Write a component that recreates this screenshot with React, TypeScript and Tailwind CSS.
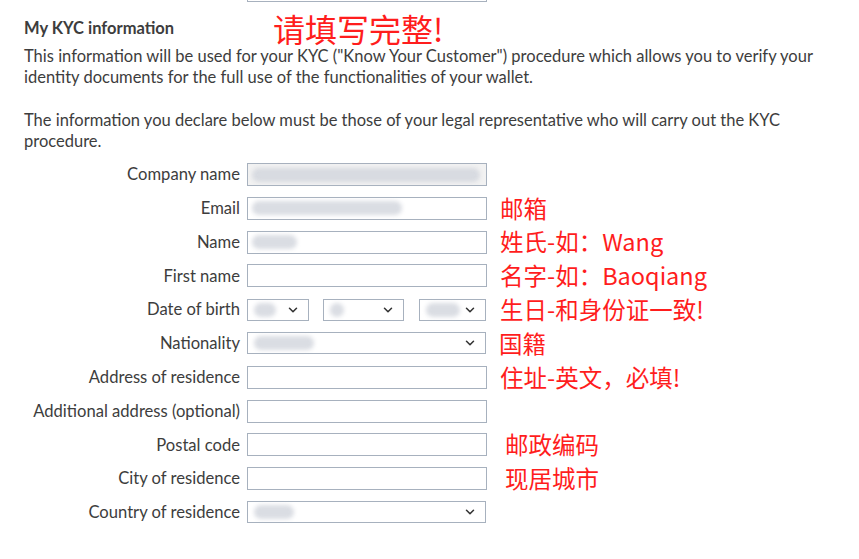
import { ChevronDown } from 'lucide-react'

const sans = 'font-["Lato","Liberation_Sans",sans-serif]'
const cjk = 'font-["Noto_Sans_CJK_SC","Liberation_Sans",sans-serif]'

/** Tache floue pour masquer une valeur */
function Blur({ w, className = '' }: { w: number; className?: string }) {
  return (
    <span
      className={`inline-block h-[14px] rounded-full bg-gray-300/80 blur-[2px] ${className}`}
      style={{ width: w }}
    />
  )
}

function Select({ w, blur, className = '' }: { w: string; blur?: number; className?: string }) {
  return (
    <div
      className={`flex h-[22px] items-center justify-between border border-[#a7b1be] bg-white pl-1.5 pr-2 ${w} ${className}`}
    >
      {blur ? <Blur w={blur} /> : <span />}
      <ChevronDown size={14} strokeWidth={2.6} className="text-[#333]" />
    </div>
  )
}

function Input({ blur, disabled }: { blur?: number; disabled?: boolean }) {
  return (
    <div
      className={`flex h-[23px] w-[240px] items-center border border-[#a7b1be] px-1 ${disabled ? 'bg-[#f2f2f2]' : 'bg-white'}`}
    >
      {blur ? <Blur w={blur} /> : null}
    </div>
  )
}

type Row = { label: string; field: React.ReactNode; note?: string; noteOffset?: boolean }

const rows: Row[] = [
  { label: 'Company name', field: <Input disabled blur={228} /> },
  { label: 'Email', field: <Input blur={150} />, note: '邮箱' },
  { label: 'Name', field: <Input blur={45} />, note: '姓氏-如：Wang' },
  { label: 'First name', field: <Input />, note: '名字-如：Baoqiang' },
  {
    label: 'Date of birth',
    field: (
      <div className="flex w-[240px]">
        <Select w="w-[62px]" blur={22} />
        <Select w="w-[81px]" blur={14} className="ml-[14px]" />
        <Select w="w-[67px]" blur={34} className="ml-[15px]" />
      </div>
    ),
    note: '生日-和身份证一致!',
  },
  { label: 'Nationality', field: <Select w="w-[239px]" blur={60} />, note: '国籍' },
  { label: 'Address of residence', field: <Input />, note: '住址-英文，必填!' },
  { label: 'Additional address (optional)', field: <Input /> },
  { label: 'Postal code', field: <Input />, note: '邮政编码', noteOffset: true },
  { label: 'City of residence', field: <Input />, note: '现居城市', noteOffset: true },
  { label: 'Country of residence', field: <Select w="w-[239px]" blur={40} /> },
]

export default function App() {
  return (
    <div className={`h-[559px] w-[859px] overflow-hidden bg-white pl-6 text-[#3d3d3d] ${sans}`}>
      {/* bas du champ précédent */}
      <div className="ml-[223px] h-[2px] w-[240px] border-x border-b border-[#a7b1be]" />

      <div className="mt-[6px] flex h-[40px] items-center">
        <h2 className="text-[16.5px] font-bold leading-5">My KYC information</h2>
        <span className={`ml-[99px] text-[32px] leading-[32px] text-[#ff1d1d] ${cjk}`}>请填写完整!</span>
      </div>

      <p className="mt-[-2px] max-w-[812px] text-[16.5px] leading-[21px]">
        This information will be used for your KYC ("Know Your Customer") procedure which allows you to verify your
        identity documents for the full use of the functionalities of your wallet.
      </p>
      <p className="mt-[22px] max-w-[800px] text-[16.5px] leading-[21px]">
        The information you declare below must be those of your legal representative who will carry out the KYC
        procedure.
      </p>

      <div className="mt-[11px] flex flex-col gap-[10.8px]">
        {rows.map((r) => (
          <div key={r.label} className="flex h-[23px] items-center">
            <label className="w-[216px] text-right text-[16.6px] leading-none">{r.label}</label>
            <div className="ml-[7px]">{r.field}</div>
            {r.note && (
              <span
                className={`${r.noteOffset ? 'ml-[18px]' : 'ml-[13px]'} whitespace-nowrap text-[23.5px] leading-none text-[#ff1d1d] ${cjk}`}
              >
                {r.note}
              </span>
            )}
          </div>
        ))}
      </div>
    </div>
  )
}
